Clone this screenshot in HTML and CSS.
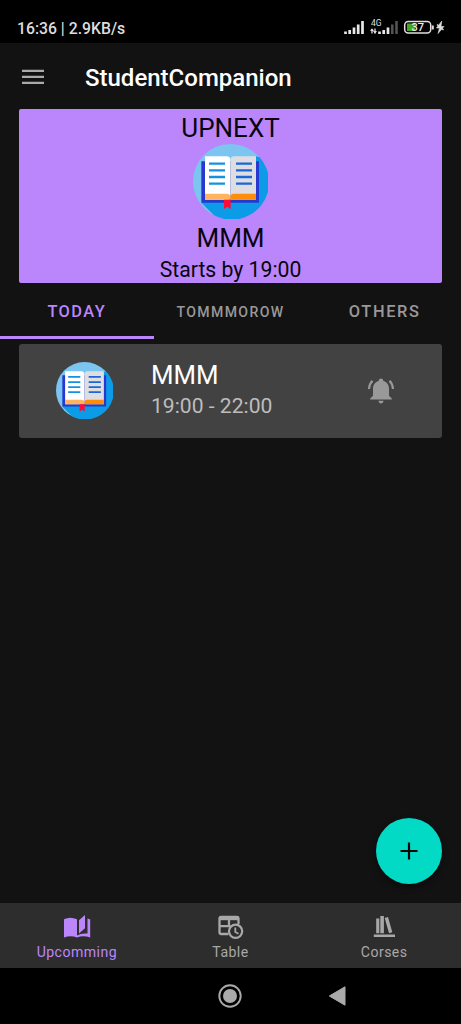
FILE: index.html
```html
<!DOCTYPE html>
<html lang="en">
<head>
<meta charset="utf-8">
<title>StudentCompanion</title>
<link rel="stylesheet" href="styles.css">
</head>
<body>
<svg class="defs" aria-hidden="true">
  <symbol id="book" viewBox="24 13 225 225">
    <circle cx="136.500" cy="125.500" r="112.500" fill="#7cc5f0"/>
    <path d="M213 50l11 3A112.500 112.500 0 0 1 87 227L49 189z" fill="#0c9be6"/>
    <path d="M49 65h173v124H49z" fill="#2638cf"/>
    <path d="M60 50h67q9 2 9 11v112q0 7-6 7H60z" fill="#fff"/>
    <path d="M213 50h-67q-10 2-10 11v119h77z" fill="#dedee2"/>
    <path d="M60 162h66q10 1 10 9v9H60z" fill="#ffb45d"/>
    <path d="M213 162h-67q-10 1-10 9v9h77z" fill="#ff8d0a"/>
    <path d="M117 180h20v28l-10-7-10 7z" fill="#ff0b38"/>
    <path d="M72 72h48M72 92h48M72 112h48M72 132h48" stroke="#1592df" stroke-width="7"/>
    <path d="M153 72h48M153 92h48M153 112h48M153 132h48" stroke="#1a67d5" stroke-width="7"/>
  </symbol>
</svg>
<div class="screen">
  <header class="status">
    <span class="clock">16:36 | 2.9KB/s</span>
    <svg class="status-icons" width="102" height="20" viewBox="0 0 102 20">
      <path d="M1.500 15v-2.500M5.700 15v-4M10 15V8.500M14.200 15V5.500M18.500 15V2" stroke="#e8e8e8" stroke-width="2.700"/>
      <text x="27" y="7" class="net">4G</text>
      <path d="M28 14.500V10M31 9.500v5" stroke="#ddd" stroke-width="1.300"/><path d="M26 12l2-2.700 2 2.700zM29 12l2 2.700 2-2.700z" fill="#ddd"/>
      <path d="M35.500 15v-2.500M39.700 15v-4M44 15V8.500" stroke="#e8e8e8" stroke-width="2.700"/>
      <path d="M48.300 15V5.500M52.500 15V2" stroke="#555" stroke-width="2.500"/>
      <rect x="60.700" y="2.500" width="26" height="11.500" rx="3.500" fill="none" stroke="#e0e0e0" stroke-width="1.500"/>
      <path d="M63 4.500h8V12h-8z" fill="#43a920"/>
      <path d="M88.800 6.500v4" stroke="#ddd" stroke-width="2"/>
      <text x="67.500" y="12" class="charge">37</text>
      <path d="M97.800 2L92.500 9h3l-1.500 5.500 6-7h-3z" fill="#ddd" stroke="#ddd" stroke-width=".6"/><path d="M93 5.500l6.500 5.500" stroke="#ddd" stroke-width="1.400"/>
    </svg>
  </header>
  <div class="appbar">
    <svg width="22" height="16" viewBox="0 0 22 16"><path d="M0 1.800h22M0 7.800h22M0 13.800h22" stroke="#aaa" stroke-width="2.200"/></svg>
    <h1 class="title">StudentCompanion</h1>
  </div>
  <section class="upnext">
    <div class="big">UPNEXT</div>
    <svg class="book-lg"><use href="#book"/></svg>
    <div class="big name">MMM</div>
    <div class="starts">Starts by 19:00</div>
  </section>
  <nav class="tabs">
    <div class="tab active">TODAY</div>
    <div class="tab small">TOMMMOROW</div>
    <div class="tab wide">OTHERS</div>
  </nav>
  <main class="list">
    <article class="item">
      <svg class="book-sm"><use href="#book"/></svg>
      <div class="info">
        <div class="course">MMM</div>
        <div class="time">19:00 - 22:00</div>
      </div>
      <svg class="bell" width="28" height="28" viewBox="0 0 28 28" fill="#999">
        <path d="M14 1.500c-1.400 0-2.300.9-2.400 2.400C8 4.900 6 8 6 11.500v7.300L3.200 21.500v1h21.600v-1L22 18.800v-7.300C22 8 20 4.900 16.400 3.900 16.300 2.400 15.400 1.500 14 1.500zM11.500 23.800h5c0 1.500-1.100 2.700-2.500 2.700s-2.500-1.200-2.500-2.700z"/>
        <path d="M5.500 3.800Q2.300 7 2 12M22.500 3.800Q25.700 7 26 12" fill="none" stroke="#999" stroke-width="2.200"/>
      </svg>
    </article>
    <button class="fab" aria-label="Add"><svg width="18" height="18" viewBox="0 0 18 18"><path d="M9 .5v17M.5 9h17" stroke="#080808" stroke-width="2.200"/></svg></button>
  </main>
  <nav class="bottom">
    <div class="dest selected">
      <svg width="28" height="28" viewBox="0 0 28 28" fill="currentColor"><path d="M1 6.300q6-3.300 13 0v16.200q4-2.600 10.500-2V5.500q1.800.4 2.700.9v18q-7-2.500-13.200 0-6.500-2.500-13 0z"/><path d="M22 2v13.200l-6 5.300V7.300z"/></svg>
      <span>Upcomming</span>
    </div>
    <div class="dest">
      <svg width="28" height="28" viewBox="0 0 28 28" fill="none" stroke="currentColor"><path d="M12.500 21H5.300q-1.800 0-1.800-1.800V5.600q0-1.800 1.800-1.800h15.400q1.800 0 1.800 1.800V11M3.500 13.200h11M13 7v7" stroke-width="2.300"/><path d="M3.500 3.500h19v3.700h-19z" fill="currentColor" stroke="none"/><circle cx="19.600" cy="18.300" r="6.600" stroke-width="2.200" fill="#2d2d2d"/><path d="M19.300 14.500V19l3.200 1.700" stroke-width="1.800"/></svg>
      <span>Table</span>
    </div>
    <div class="dest">
      <svg width="28" height="28" viewBox="0 0 28 28" fill="currentColor"><path d="M3.800 21.500h21.200v2.500H3.800zM6.200 5.500h3.100v14.700H6.200zM10.300 3h3.600v17.200h-3.600zM14.700 5.100l3.300-1 4.300 15.100-3.300 1z"/></svg>
      <span>Corses</span>
    </div>
  </nav>
  <footer class="system">
    <span></span>
    <svg width="24" height="24" viewBox="0 0 24 24"><circle cx="12" cy="12" r="10.700" fill="none" stroke="#aaa" stroke-width="1.900"/><circle cx="12" cy="12" r="7" fill="#aaa"/></svg>
    <svg class="back" width="18" height="20" viewBox="0 0 18 20"><path d="M17 .8v18.400L1.300 10z" fill="#aaa" stroke="#aaa" stroke-linejoin="round"/></svg>
  </footer>
</div>
</body>
</html>
```
FILE: styles.css
```css
* { box-sizing: border-box; }
body { margin: 0; background: #121212; font-family: Roboto, sans-serif; }
.defs { display: none; }
svg { display: block; flex: none; }
.screen { display: flex; flex-direction: column; width: 461px; height: 1024px; background: #121212; }
.status { display: flex; justify-content: space-between; align-items: center; height: 43px; padding: 15px 15px 0 17px; background: #000; color: #ddd; }
.clock { font-size: 15.750px; line-height: 20px; font-weight: 500; }
.status-icons { margin-bottom: 1px; }
.net { font-size: 8.500px; fill: #ddd; }
.charge { font-size: 11px; font-weight: 500; fill: #eee; }
.appbar { display: flex; align-items: center; gap: 41px; height: 66px; padding: 2px 22px 0; }
.title { margin: 1px 0 0; color: #fff; font-size: 24px; font-weight: 500; line-height: 28px; }
.upnext { display: flex; flex-direction: column; align-items: center; height: 174px; margin: 0 19px; padding-top: 4px; border-radius: 2px; background: #bb86fc; color: #080410; }
.big { font-size: 26px; line-height: 31px; }
.book-lg { width: 75px; height: 75px; }
.name { margin-top: 4px; }
.starts { font-size: 21.200px; line-height: 25px; margin-top: 3px; }
.tabs { display: grid; grid-template-columns: repeat(3, 1fr); height: 56px; }
.tab { display: flex; align-items: center; justify-content: center; padding-top: 4px; color: #999; font-size: 16.400px; font-weight: 500; letter-spacing: 1.470px; border-bottom: 3px solid transparent; }
.tab.small { font-size: 14.100px; letter-spacing: 1.350px; }
.tab.wide { padding-left: 1px; letter-spacing: 1.650px; }
.tab.active { color: #bb86fc; border-color: #bb86fc; }
.list { display: flex; flex-direction: column; justify-content: space-between; flex: 1; padding: 5px 19px 19px; }
.item { display: flex; align-items: center; height: 94px; padding: 0 47px 0 37px; border-radius: 3px; background: #424242; }
.book-sm { width: 57px; height: 57px; margin-bottom: 1px; }
.info { flex: 1; margin-left: 38px; padding-bottom: 4px; }
.course { color: #fff; font-size: 25.800px; line-height: 31px; }
.time { color: #bdbdbd; font-size: 21.100px; line-height: 25px; margin-top: 2px; }
.fab { display: flex; align-items: center; justify-content: center; align-self: flex-end; width: 66px; height: 66px; padding: 0; border: 0; border-radius: 50%; background: #03dac5; box-shadow: 0 3px 7px rgba(0, 0, 0, .45); }
.bottom { display: grid; grid-template-columns: repeat(3, 1fr); height: 65px; background: #2d2d2d; color: #a8a8a8; }
.dest { display: flex; flex-direction: column; align-items: center; padding-top: 10px; font-size: 14.100px; line-height: 18px; letter-spacing: .45px; }
.dest span { margin-top: 2px; }
.selected { color: #bb86fc; }
.system { display: grid; grid-template-columns: 218px 110px 1fr; align-items: center; height: 56px; background: #000; }
```
